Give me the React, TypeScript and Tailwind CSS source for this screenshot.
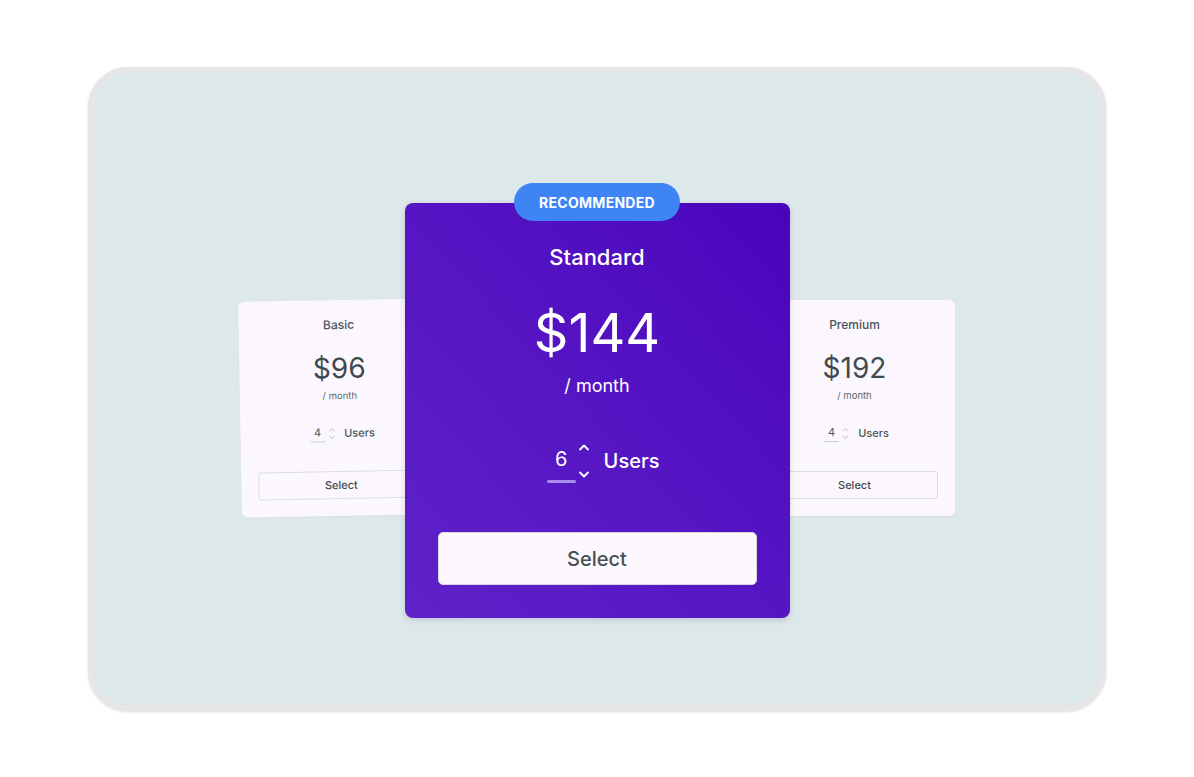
import React from "react";

const FONT = { fontFamily: "Inter, 'Noto Sans', sans-serif" };

function Chevron({ dir, className }: { dir: "up" | "down"; className?: string }) {
  return (
    <svg viewBox="0 0 12 8" className={className} fill="none" stroke="currentColor" strokeWidth={1.8} strokeLinecap="round" strokeLinejoin="round">
      {dir === "up" ? <path d="M2 6.5 6 2.5l4 4" /> : <path d="M2 1.5 6 5.5l4-4" />}
    </svg>
  );
}

function SideCard({ name, price, className }: { name: string; price: string; className?: string }) {
  return (
    <div
      className={
        "relative flex h-[216px] w-[200px] flex-col items-center rounded-[6px] bg-[#fcf7fe] px-[17px] pt-[17px] shadow-[0_1px_2px_rgba(0,0,0,0.04)] " +
        (className ?? "")
      }
    >
      <div className="text-[12px] font-medium leading-[16px] text-[#4a5558]">{name}</div>
      <div className="mt-[17px] text-[28px] leading-[36px] text-[#3f4a4e]">{price}</div>
      <div className="mt-[4px] text-[9.5px] leading-[12px] text-[#5b6569]">/ month</div>
      <div className="mt-[23px] ml-[4px] flex items-center">
        <div className="flex flex-col items-center">
          <span className="text-[11px] leading-[14px] text-[#4a5558]">4</span>
          <span className="mt-[2px] h-[1px] w-[15px] bg-[#b9d6d6]" />
        </div>
        <div className="ml-[3px] flex flex-col text-[#c9d2d6]">
          <Chevron dir="up" className="h-[5px] w-[7px]" />
          <Chevron dir="down" className="mt-[3px] h-[5px] w-[7px]" />
        </div>
        <span className="ml-[9px] text-[11px] font-medium text-[#4a5558]">Users</span>
      </div>
      <button className="mt-[29px] flex h-[28px] w-full items-center justify-center rounded-[3px] border border-[#d6e0e0] bg-[#fcf7fe] text-[11px] font-medium text-[#3f4a4e]">
        Select
      </button>
    </div>
  );
}

export default function App() {
  return (
    <div className="min-h-screen w-full bg-white" style={FONT}>
      <div className="px-[88px] pt-[67px]">
        <div className="h-[644px] w-[1018px] rounded-[40px] border-[6px] border-[#e6e6e6] bg-[#dde8ea] shadow-[0_1px_3px_rgba(0,0,0,0.14)]">
          <div className="flex items-start justify-center pt-[130px]">
            <SideCard name="Basic" price="$96" className="z-0 mr-[-35px] mt-[97px] -rotate-1" />

            <div className="relative z-10 flex h-[415px] w-[385px] flex-col items-center rounded-[8px] bg-gradient-to-tr from-[#5f22c8] via-[#5515c3] to-[#4a03bc] px-[33px] pt-[40px] shadow-[0_2px_6px_rgba(40,0,90,0.15)]">
              <div className="absolute -top-[20px] left-1/2 flex h-[38px] w-[166px] -translate-x-1/2 items-center justify-center rounded-full bg-[#3e84f4] text-[14px] font-bold tracking-[0.02em] text-white">
                RECOMMENDED
              </div>
              <div className="text-[22px] font-medium leading-[28px] text-white">Standard</div>
              <div className="mt-[30px] text-[54px] leading-[64px] text-white">$144</div>
              <div className="mt-[10px] text-[18px] leading-[22px] text-white">/ month</div>
              <div className="mt-[49px] ml-[12px] flex items-center">
                <div className="flex flex-col items-center">
                  <span className="text-[20px] leading-[26px] text-white">6</span>
                  <span className="mt-[8px] h-[3px] w-[29px] rounded-full bg-[#a98bed]" />
                </div>
                <div className="-mt-[8px] ml-[2px] flex flex-col text-white">
                  <Chevron dir="up" className="h-[8px] w-[12px]" />
                  <Chevron dir="down" className="mt-[20px] h-[8px] w-[12px]" />
                </div>
                <span className="ml-[14px] -mt-[8px] text-[20px] font-medium text-white">Users</span>
              </div>
              <button className="mt-[49px] flex h-[53px] w-full items-center justify-center rounded-[5px] border border-[#d9d4e2] bg-[#fdf8fe] text-[20px] font-medium text-[#455155]">
                Select
              </button>
            </div>

            <SideCard name="Premium" price="$192" className="z-0 ml-[-35px] mt-[97px]" />
          </div>
        </div>
      </div>
    </div>
  );
}
